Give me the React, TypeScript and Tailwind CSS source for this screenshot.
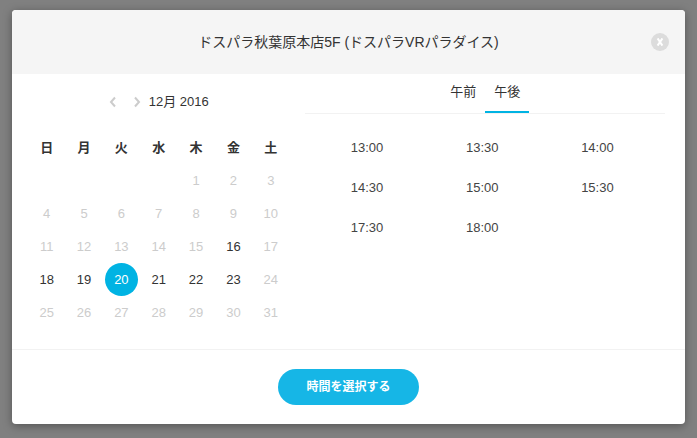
import React, { useState } from "react";
import clsx from "clsx";

const weekdays = ["日", "月", "火", "水", "木", "金", "土"];
const weeks: (number | null)[][] = [
  [null, null, null, null, 1, 2, 3],
  [4, 5, 6, 7, 8, 9, 10],
  [11, 12, 13, 14, 15, 16, 17],
  [18, 19, 20, 21, 22, 23, 24],
  [25, 26, 27, 28, 29, 30, 31],
];
const availableDays = [16, 18, 19, 20, 21, 22, 23];

const tabs = [
  { id: "am", label: "午前", times: ["11:00", "11:30"] },
  { id: "pm", label: "午後", times: ["13:00", "13:30", "14:00", "14:30", "15:00", "15:30", "17:30", "18:00"] },
];

const Calendar: React.FC = () => {
  const [selected, setSelected] = useState(20);

  return (
    <section className="pt-[18px] pb-5">
      <div className="flex h-5 items-center justify-center gap-2">
        <div className="flex gap-4">
          <button type="button" aria-label="前の月" className="w-2">
            <svg viewBox="0 0 8 12" className="h-3 w-2" fill="none" stroke="#ccc" strokeWidth="2">
              <path d="M6 1.5 L2 6 L6 10.5" />
            </svg>
          </button>
          <button type="button" aria-label="次の月" className="w-2">
            <svg viewBox="0 0 8 12" className="h-3 w-2" fill="none" stroke="#ccc" strokeWidth="2">
              <path d="M2 1.5 L6 6 L2 10.5" />
            </svg>
          </button>
        </div>
        <h2 className="leading-5">12月 2016</h2>
      </div>

      <table className="mt-[19px] w-full table-fixed border-collapse text-center">
        <thead>
          <tr className="h-[33px]">
            {weekdays.map((day) => (
              <th key={day} scope="col" className="p-0 leading-5 font-bold">
                {day}
              </th>
            ))}
          </tr>
        </thead>
        <tbody>
          {weeks.map((week, i) => (
            <tr key={i} className="h-[33px]">
              {week.map((day, j) => (
                <td key={j} className="p-0">
                  {day && (
                    <button
                      type="button"
                      disabled={!availableDays.includes(day)}
                      onClick={() => setSelected(day)}
                      className={clsx(
                        "mx-auto block h-[33px] w-[33px] rounded-full leading-5",
                        day === selected && "bg-[#00b3e3] text-white",
                        !availableDays.includes(day) && "text-[#ccc]"
                      )}
                    >
                      {day}
                    </button>
                  )}
                </td>
              ))}
            </tr>
          ))}
        </tbody>
      </table>
    </section>
  );
};

const TimePicker: React.FC = () => {
  const [active, setActive] = useState("pm");
  const times = tabs.find((tab) => tab.id === active)!.times;

  return (
    <section>
      <div role="tablist" className="flex h-10 justify-center border-b border-[#f2f2f2]">
        {tabs.map((tab) => (
          <button
            key={tab.id}
            type="button"
            role="tab"
            aria-selected={active === tab.id}
            onClick={() => setActive(tab.id)}
            className={clsx(
              "w-11 border-b-2 pb-0.5 leading-5",
              active === tab.id ? "border-[#00b3e3]" : "border-transparent"
            )}
          >
            {tab.label}
          </button>
        ))}
      </div>
      <div className="grid grid-cols-3 pt-3.5 pr-2.5 pl-1 text-[#444]">
        {times.map((time) => (
          <button key={time} type="button" className="h-10 leading-5">
            {time}
          </button>
        ))}
      </div>
    </section>
  );
};

const App: React.FC = () => {
  return (
    <div className="min-h-screen bg-[#808080] px-3 pt-2.5 pb-3.5 font-['Liberation_Sans','Noto_Sans_CJK_JP',sans-serif] text-[13px] text-[#333]">
      <div role="dialog" aria-labelledby="shop" className="overflow-hidden rounded bg-white shadow-[0_2px_10px_rgba(0,0,0,0.35)]">
        <header className="grid h-16 grid-cols-[1fr_auto_1fr] items-center bg-[#f5f5f5] px-4">
          <h1 id="shop" className="col-start-2 text-sm leading-5">
            ドスパラ秋葉原本店5F (ドスパラVRパラダイス)
          </h1>
          <button
            type="button"
            aria-label="閉じる"
            className="flex h-[18px] w-[18px] items-center justify-center justify-self-end rounded-full bg-[#dcdcdc]"
          >
            <svg viewBox="0 0 8 8" className="h-2 w-2" fill="none" stroke="#fff" strokeWidth="2">
              <path d="M1.6 0.4 L6.4 7.6 M6.4 0.4 L1.6 7.6" />
            </svg>
          </button>
        </header>

        <div className="grid grid-cols-[minmax(0,8fr)_minmax(0,11fr)] gap-4 pr-5 pl-4">
          <Calendar />
          <TimePicker />
        </div>

        <footer className="flex justify-center border-t border-[#f2f2f2] pt-[19px] pb-[19px]">
          <button type="button" className="h-9 w-[141px] rounded-full bg-[#16b6e6] text-xs leading-5 font-bold text-white">
            時間を選択する
          </button>
        </footer>
      </div>
    </div>
  );
};

export default App;
